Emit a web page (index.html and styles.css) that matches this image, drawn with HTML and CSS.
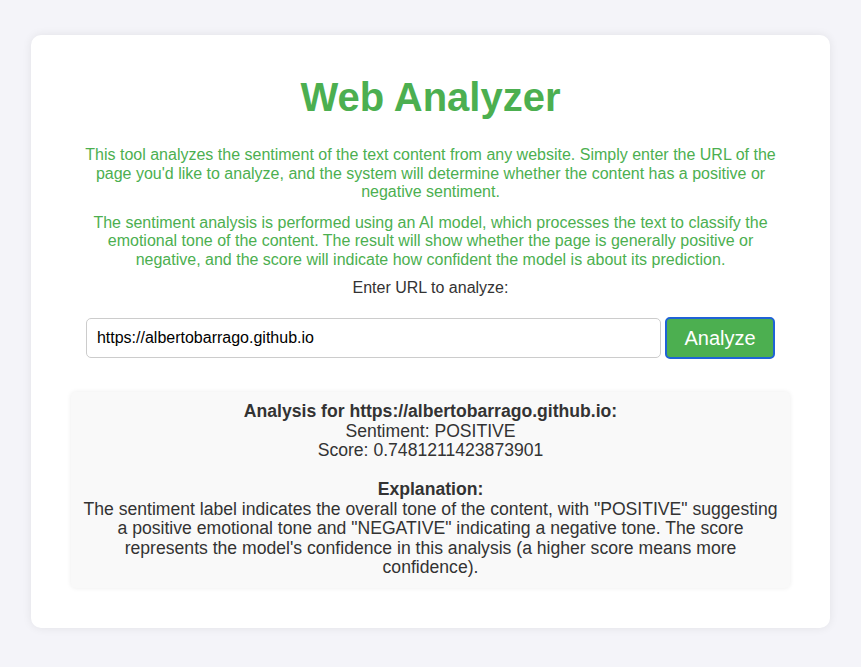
FILE: index.html
```html
<!DOCTYPE html>
<html lang="en">
<head>
<meta charset="utf-8">
<title>Web Analyzer</title>
<link rel="stylesheet" href="styles.css">
</head>
<body>
<div class="container">
  <h1 class="title">Web Analyzer</h1>
  <p class="intro">This tool analyzes the sentiment of the text content from any website. Simply enter the URL of the page you'd like to analyze, and the system will determine whether the content has a positive or negative sentiment.</p>
  <p class="intro">The sentiment analysis is performed using an AI model, which processes the text to classify the emotional tone of the content. The result will show whether the page is generally positive or negative, and the score will indicate how confident the model is about its prediction.</p>
  <form class="form">
    <label class="label" for="url">Enter URL to analyze:</label>
    <div class="row">
      <input class="url" id="url" type="text" value="https://albertobarrago.github.io">
      <button class="btn" type="button">Analyze</button>
    </div>
  </form>
  <div class="result">
    <strong>Analysis for https://albertobarrago.github.io:</strong><br>
    Sentiment: POSITIVE<br>
    Score: 0.7481211423873901<br><br>
    <strong>Explanation:</strong><br>
    The sentiment label indicates the overall tone of the content, with "POSITIVE" suggesting a positive emotional tone and "NEGATIVE" indicating a negative tone. The score represents the model's confidence in this analysis (a higher score means more confidence).
  </div>
</div>
</body>
</html>
```

FILE: styles.css
```css
html, body {
  margin: 0;
  padding: 0;
}
body {
  background: #f4f4f9;
  font-family: "Liberation Sans", Arial, sans-serif;
  padding: 35px 31px 39px;
}
.container {
  background: #fff;
  border-radius: 10px;
  box-shadow: 0 0 10px rgba(0, 0, 0, 0.08);
  padding: 40px;
  text-align: center;
}
.title {
  color: #4caf50;
  font-size: 40px;
  margin: 0 0 26px;
}
.intro {
  color: #4caf50;
  font-size: 16px;
  line-height: 18.5px;
  margin: 0;
  padding: 0 10px;
}
.intro + .intro {
  margin-top: 12px;
}
.form {
  margin: 0 0 33px;
}
.label {
  display: block;
  color: #333;
  font-size: 16px;
  padding-top: 10px;
}
.row {
  margin-top: 20px;
  display: flex;
  justify-content: center;
  align-items: center;
  gap: 4px;
}
.url {
  width: 80%;
  box-sizing: border-box;
  height: 40px;
  padding: 8px 10px;
  font-family: "Liberation Sans", Arial, sans-serif;
  font-size: 16px;
  color: #000;
  border: 1px solid #ccc;
  border-radius: 5px;
}
.btn {
  width: 110px;
  height: 42px;
  background: #4caf50;
  color: #fff;
  font-family: "Liberation Sans", Arial, sans-serif;
  font-size: 20px;
  border: 2px solid #1f63d6;
  border-radius: 5px;
  padding: 0;
}
.result {
  background: #f9f9f9;
  border-radius: 5px;
  box-shadow: 0 0 5px rgba(0, 0, 0, 0.08);
  color: #333;
  font-size: 17.6px;
  line-height: 19.5px;
  padding: 10px;
  text-align: center;
}
```
